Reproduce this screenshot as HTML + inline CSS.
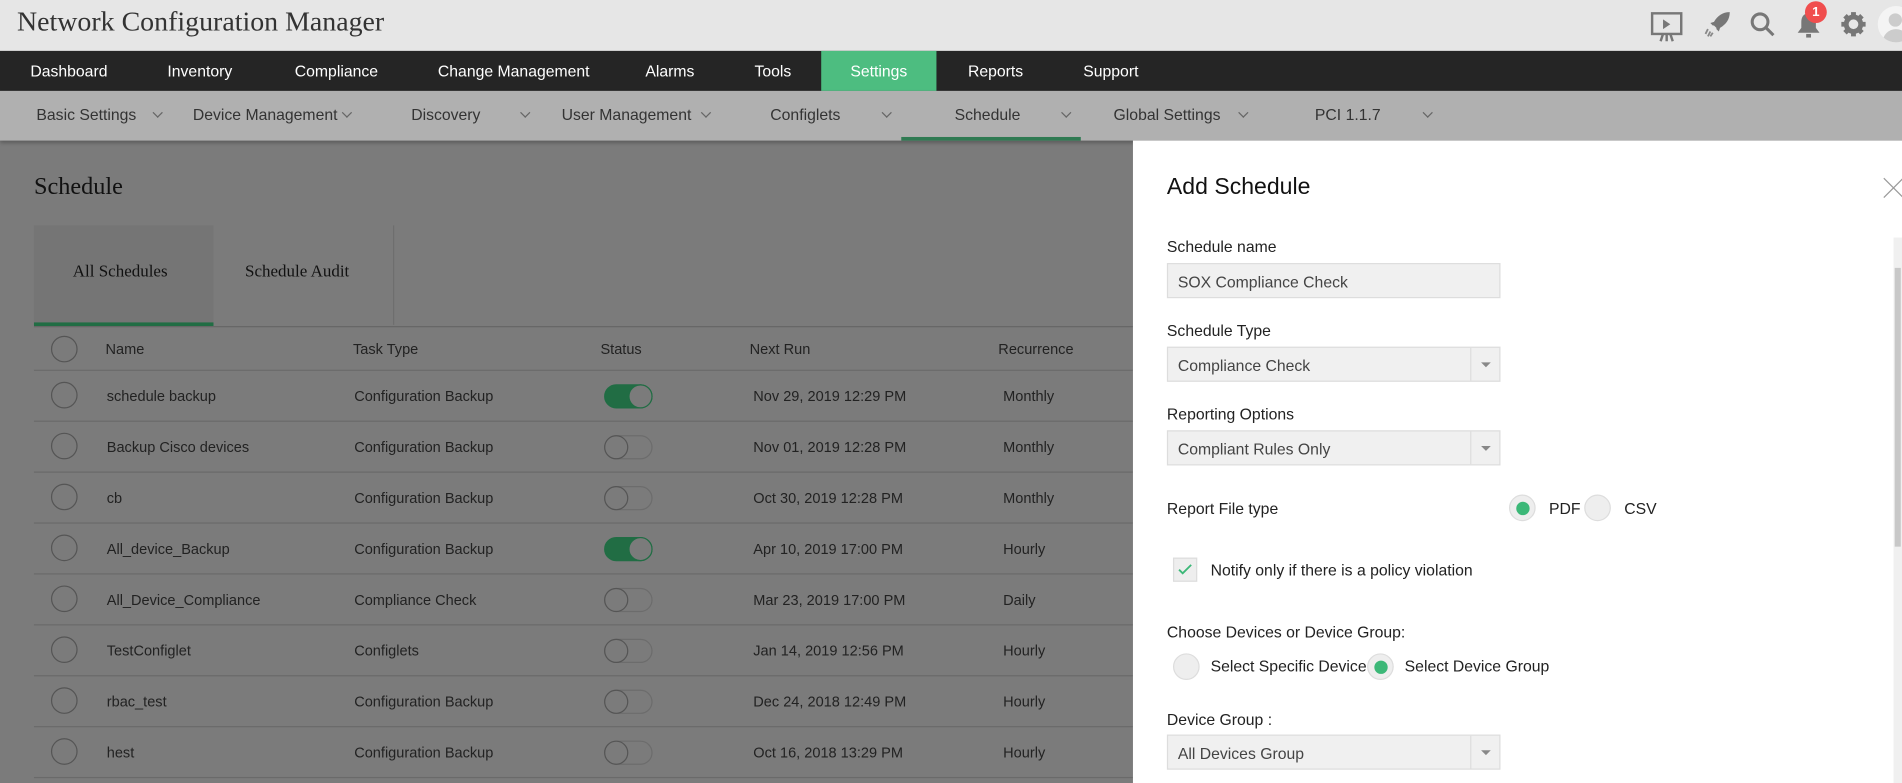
<!DOCTYPE html>
<html><head><meta charset="utf-8"><style>
*{margin:0;padding:0;box-sizing:border-box}
html,body{width:1902px;height:783px;overflow:hidden;background:#7b7b7b}
#s{position:absolute;left:0;top:0;width:1568px;height:646px;transform:scale(1.21301,1.2121);transform-origin:0 0;font-family:"Liberation Sans",sans-serif;font-size:13px;overflow:hidden;background:#7b7b7b}
.a{position:absolute;white-space:nowrap}
#hdr{left:0;top:0;width:1568px;height:42px;background:#e6e6e6}
#nav{left:0;top:42px;width:1568px;height:33px;background:#252525}
#nav span{position:absolute;top:9px;color:#fff;font-size:13px}
#sub{left:0;top:75px;width:1568px;height:41px;background:#b0b0b0;box-shadow:0 2px 3px rgba(0,0,0,.25)}
#sub span{position:absolute;top:12px;color:#333;font-size:13px}
.chev{position:absolute;width:6px;height:6px;border-right:1px solid #666;border-bottom:1px solid #666;transform:rotate(45deg)}
.row{position:absolute;left:28px;width:906px;height:42px;border-bottom:1px solid #6a6a6a}
.row span{position:absolute;top:14px;color:#222;font-size:12px}
.cb{position:absolute;left:14px;top:9px;width:22px;height:22px;border:1px solid #555;border-radius:50%}
.tg{position:absolute;left:470px;top:11px;width:40px;height:20px;border-radius:10px;border:1px solid #6c6c6c}
.tg.on{background:#216d44;border-color:#216d44}
.tg i{position:absolute;top:-1px;width:20px;height:20px;border-radius:50%;border:1px solid #555;background:#7b7b7b}
.tg.on i{right:-1px;background:#7b7b7b;border-color:#216d44}
.tg.off i{left:-1px}
#pn{left:934px;top:116px;width:634px;height:530px;background:#fff}
#pn .l{position:absolute;left:28px;color:#222;font-size:13px}
.inp{position:absolute;left:28px;width:275px;height:29px;background:#f0f0f0;border:1px solid #ddd;color:#444;font-size:13px;padding:7px 8px}
.inp b{position:absolute;right:0;top:0;width:24px;height:27px;border-left:1px solid #ddd}
.inp b:after{content:"";position:absolute;left:8px;top:12px;border:4px solid transparent;border-top:4px solid #888}
.rd{position:absolute;width:22px;height:22px;border-radius:50%;background:#eee;border:1px solid #ddd}
.rd.on:after{content:"";position:absolute;left:5px;top:5px;width:11px;height:11px;border-radius:50%;background:#3cb878}
</style></head><body><div id="s">
<div id="hdr" class="a"><span class="a" style="left:14px;top:5px;font-family:'Liberation Serif',serif;font-size:23px;color:#333">Network Configuration Manager</span>
<svg class="a" style="left:1360px;top:8px" width="28" height="28" viewBox="0 0 28 28" fill="none" stroke="#777" stroke-width="2"><rect x="2" y="3" width="24" height="17"/><path d="M11 8l6 4-6 4z" fill="#777" stroke="none"/><path d="M14 20v6M9 26l2-6M19 26l-2-6"/></svg>
<svg class="a" style="left:1405px;top:9px" width="22" height="22" viewBox="0 0 22 22"><path d="M21 1c-6 0-10 3-13 8l-3 1 2 2 1-0 2 2 0 1 2 2 1-3c5-3 8-7 8-13z" fill="#777"/><path d="M3 15l-2 4M5 17l-2 4M7 18l-2 3" stroke="#888" stroke-width="1.5"/></svg>
<svg class="a" style="left:1442px;top:9px" width="22" height="22" viewBox="0 0 22 22" fill="none" stroke="#777" stroke-width="2.5"><circle cx="9" cy="9" r="6.5"/><path d="M14 14l6 6"/></svg>
<svg class="a" style="left:1480px;top:9px" width="22" height="24" viewBox="0 0 22 24"><path d="M11 2c-4 0-6 3-6 7v5l-3 4h18l-3-4V9c0-4-2-7-6-7z" fill="#777"/><rect x="9" y="19" width="4" height="3" fill="#777"/></svg>
<div class="a" style="left:1488px;top:1px;width:18px;height:18px;border-radius:50%;background:#f04e4e;color:#fff;font-size:11px;font-weight:bold;text-align:center;line-height:18px">1</div>
<svg class="a" style="left:1517px;top:9px" width="22" height="22" viewBox="0 0 22 22"><circle cx="11" cy="11" r="6" fill="none" stroke="#777" stroke-width="4"/><g stroke="#777" stroke-width="4"><path d="M11 1v4M11 17v4M1 11h4M17 11h4M4 4l3 3M15 15l3 3M4 18l3-3M15 7l3-3"/></g></svg>
<div class="a" style="left:1548px;top:5px;width:30px;height:30px;border-radius:50%;background:#f4f4f4;overflow:hidden"><div class="a" style="left:9px;top:6px;width:11px;height:11px;border-radius:50%;background:#ccc"></div><div class="a" style="left:4px;top:19px;width:22px;height:14px;border-radius:11px 11px 0 0;background:#ccc"></div></div>
</div>
<div id="nav" class="a">
<div class="a" style="left:677px;top:0;width:95px;height:33px;background:#4dbd80"></div>
<span style="left:25px">Dashboard</span><span style="left:138px">Inventory</span><span style="left:243px">Compliance</span><span style="left:361px">Change Management</span><span style="left:532px">Alarms</span><span style="left:622px">Tools</span><span style="left:701px">Settings</span><span style="left:798px">Reports</span><span style="left:893px">Support</span>
</div>
<div id="sub" class="a">
<span style="left:30px">Basic Settings</span><i class="chev" style="left:127px;top:15px"></i>
<span style="left:159px">Device Management</span><i class="chev" style="left:283px;top:15px"></i>
<span style="left:339px">Discovery</span><i class="chev" style="left:430px;top:15px"></i>
<span style="left:463px">User Management</span><i class="chev" style="left:579px;top:15px"></i>
<span style="left:635px">Configlets</span><i class="chev" style="left:728px;top:15px"></i>
<span style="left:787px">Schedule</span><i class="chev" style="left:876px;top:15px"></i>
<span style="left:918px">Global Settings</span><i class="chev" style="left:1022px;top:15px"></i>
<span style="left:1084px">PCI 1.1.7</span><i class="chev" style="left:1174px;top:15px"></i>
<div class="a" style="left:743px;top:38px;width:148px;height:3px;background:#2f7a52"></div>
</div>
<span class="a" style="left:28px;top:143px;font-family:'Liberation Serif',serif;font-size:20px;color:#111">Schedule</span>
<div class="a" style="left:28px;top:186px;width:148px;height:82px;background:#757575"></div>
<div class="a" style="left:176px;top:186px;width:149px;height:82px;border-right:1px solid #6e6e6e"></div>
<span class="a" style="left:60px;top:217px;font-family:'Liberation Serif',serif;font-size:14px;color:#111">All Schedules</span>
<span class="a" style="left:202px;top:217px;font-family:'Liberation Serif',serif;font-size:14px;color:#111">Schedule Audit</span>
<div class="a" style="left:28px;top:266px;width:148px;height:3px;background:#216d44"></div>
<div class="a" style="left:28px;top:269px;width:906px;height:1px;background:#666"></div>
<div class="row" style="top:270px;height:36px"><i class="cb" style="top:7px"></i><span style="left:59px;top:11px">Name</span><span style="left:263px;top:11px">Task Type</span><span style="left:467px;top:11px">Status</span><span style="left:590px;top:11px">Next Run</span><span style="left:795px;top:11px">Recurrence</span></div>
<div class="row" style="top:306px"><i class="cb"></i><span style="left:60px">schedule backup</span><span style="left:264px">Configuration Backup</span><i class="tg on"><i></i></i><span style="left:593px">Nov 29, 2019 12:29 PM</span><span style="left:799px">Monthly</span></div>
<div class="row" style="top:348px"><i class="cb"></i><span style="left:60px">Backup Cisco devices</span><span style="left:264px">Configuration Backup</span><i class="tg off"><i></i></i><span style="left:593px">Nov 01, 2019 12:28 PM</span><span style="left:799px">Monthly</span></div>
<div class="row" style="top:390px"><i class="cb"></i><span style="left:60px">cb</span><span style="left:264px">Configuration Backup</span><i class="tg off"><i></i></i><span style="left:593px">Oct 30, 2019 12:28 PM</span><span style="left:799px">Monthly</span></div>
<div class="row" style="top:432px"><i class="cb"></i><span style="left:60px">All_device_Backup</span><span style="left:264px">Configuration Backup</span><i class="tg on"><i></i></i><span style="left:593px">Apr 10, 2019 17:00 PM</span><span style="left:799px">Hourly</span></div>
<div class="row" style="top:474px"><i class="cb"></i><span style="left:60px">All_Device_Compliance</span><span style="left:264px">Compliance Check</span><i class="tg off"><i></i></i><span style="left:593px">Mar 23, 2019 17:00 PM</span><span style="left:799px">Daily</span></div>
<div class="row" style="top:516px"><i class="cb"></i><span style="left:60px">TestConfiglet</span><span style="left:264px">Configlets</span><i class="tg off"><i></i></i><span style="left:593px">Jan 14, 2019 12:56 PM</span><span style="left:799px">Hourly</span></div>
<div class="row" style="top:558px"><i class="cb"></i><span style="left:60px">rbac_test</span><span style="left:264px">Configuration Backup</span><i class="tg off"><i></i></i><span style="left:593px">Dec 24, 2018 12:49 PM</span><span style="left:799px">Hourly</span></div>
<div class="row" style="top:600px"><i class="cb"></i><span style="left:60px">hest</span><span style="left:264px">Configuration Backup</span><i class="tg off"><i></i></i><span style="left:593px">Oct 16, 2018 13:29 PM</span><span style="left:799px">Hourly</span></div>
<div id="pn" class="a">
<span class="l" style="top:28px;font-size:19px;color:#111">Add Schedule</span>
<svg class="a" style="left:618px;top:30px" width="18" height="18" viewBox="0 0 18 18" stroke="#999" stroke-width="1"><path d="M1 1l16 16M17 1L1 17"/></svg>
<div class="a" style="left:627px;top:80px;width:7px;height:450px;background:#f0f0f0"><div class="a" style="left:1px;top:25px;width:5px;height:230px;background:#c8c8c8"></div></div>
<span class="l" style="top:80px">Schedule name</span>
<div class="inp" style="top:101px">SOX Compliance Check</div>
<span class="l" style="top:149px">Schedule Type</span>
<div class="inp" style="top:170px">Compliance Check<b></b></div>
<span class="l" style="top:218px">Reporting Options</span>
<div class="inp" style="top:239px">Compliant Rules Only<b></b></div>
<span class="l" style="top:296px">Report File type</span>
<i class="rd on" style="left:310px;top:292px"></i><span class="l" style="left:343px;top:296px">PDF</span>
<i class="rd" style="left:372px;top:292px"></i><span class="l" style="left:405px;top:296px">CSV</span>
<div class="a" style="left:33px;top:344px;width:20px;height:20px;background:#eee;border:1px solid #ddd"></div>
<svg class="a" style="left:37px;top:349px" width="12" height="10" viewBox="0 0 12 10" fill="none" stroke="#3cb878" stroke-width="1.5"><path d="M1 5l3 3 7-7"/></svg>
<span class="l" style="left:64px;top:347px">Notify only if there is a policy violation</span>
<span class="l" style="top:398px">Choose Devices or Device Group:</span>
<i class="rd" style="left:33px;top:423px"></i><span class="l" style="left:64px;top:426px">Select Specific Device</span>
<i class="rd on" style="left:193px;top:423px"></i><span class="l" style="left:224px;top:426px">Select Device Group</span>
<span class="l" style="top:470px">Device Group :</span>
<div class="inp" style="top:490px">All Devices Group<b></b></div>
</div>
</div></body></html>
